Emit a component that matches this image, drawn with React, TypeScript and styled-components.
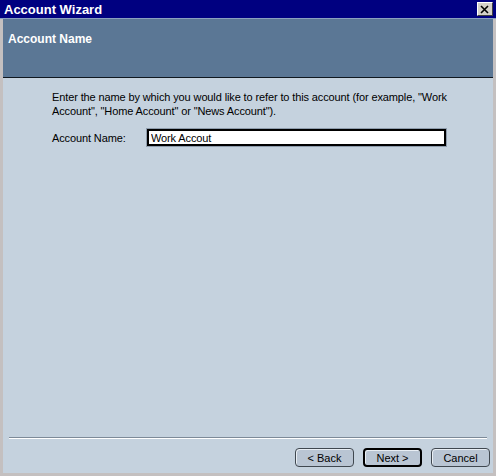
import styled, { createGlobalStyle } from 'styled-components';

const GlobalStyle = createGlobalStyle`
    html, body {
        margin: 0;
        padding: 0;
        background: #c0c0c0;
    }
    * {
        box-sizing: border-box;
    }
`;

const Window = styled.div`
    width: 496px;
    height: 476px;
    display: flex;
    flex-direction: column;
    background: #c4c0c0;
    padding: 0 3px 3px 3px;
    font-family: Tahoma, 'Liberation Sans', Arial, sans-serif;
    font-size: 11px;
`;

const TitleBar = styled.div`
    height: 19px;
    margin: 0 -3px;
    padding: 0 3px 0 4px;
    background: #000080;
    display: flex;
    align-items: center;
    justify-content: space-between;
    color: #fff;
    font-weight: bold;
    font-size: 13px;
    border-bottom: 1px solid #8aa0c0;
`;

const CloseButton = styled.button`
    width: 16px;
    height: 14px;
    padding: 0;
    background: #d4d0c8;
    border: 1px solid;
    border-color: #fff #404040 #404040 #fff;
    display: flex;
    align-items: center;
    justify-content: center;
`;

const Header = styled.div`
    height: 59px;
    background: #5b7795;
    border-bottom: 1px solid #101820;
    color: #fff;
    font-weight: bold;
    font-size: 12px;
    padding: 13px 5px;
`;

const Body = styled.div`
    flex: 1;
    background: #c5d2de;
    display: flex;
    flex-direction: column;
`;

const Content = styled.div`
    flex: 1;
    padding: 12px 40px 0 49px;
    color: #000;
    line-height: 14px;
    letter-spacing: -0.12px;
`;

const Intro = styled.p`
    margin: 0 0 11px 0;
`;

const FieldRow = styled.div`
    display: flex;
    align-items: center;
`;

const Label = styled.label`
    width: 95px;
`;

const TextInput = styled.input`
    width: 299px;
    height: 17px;
    border: 2px solid #000;
    outline: 1px solid #8e9cac;
    font-family: Tahoma, 'Liberation Sans', Arial, sans-serif;
    font-size: 11px;
    letter-spacing: -0.12px;
    padding: 0 2px;
    background: #fff;
`;

const Separator = styled.div`
    margin: 0 6px 0 6px;
    border-top: 1px solid #7d8a98;
    border-bottom: 1px solid #fff;
`;

const ButtonRow = styled.div`
    display: flex;
    justify-content: flex-end;
    gap: 9px;
    padding: 9px 3px 6px 0;
`;

const WizardButton = styled.button<{ $default?: boolean }>`
    width: 59px;
    height: 19px;
    padding: 0;
    background: #b9c5d3;
    border: ${(p) => (p.$default ? '2px solid #000' : '1px solid #404850')};
    border-radius: 4px;
    box-shadow: inset 1px 1px 0 #e8eef4;
    font-family: Tahoma, 'Liberation Sans', Arial, sans-serif;
    font-size: 11px;
    color: #000;
`;

export default function App() {
    return (
        <>
            <GlobalStyle />
            <Window>
                <TitleBar>
                    <span>Account Wizard</span>
                    <CloseButton>
                        <svg width="10" height="9" viewBox="0 0 10 9">
                            <path d="M1 1 L8 8 M8 1 L1 8" stroke="#000" strokeWidth="1.6" />
                        </svg>
                    </CloseButton>
                </TitleBar>
                <Header>Account Name</Header>
                <Body>
                    <Content>
                        <Intro>
                            Enter the name by which you would like to refer to this account (for example, "Work
                            Account", "Home Account" or "News Account").
                        </Intro>
                        <FieldRow>
                            <Label>Account Name:</Label>
                            <TextInput defaultValue="Work Accout" />
                        </FieldRow>
                    </Content>
                    <Separator />
                    <ButtonRow>
                        <WizardButton>&lt; Back</WizardButton>
                        <WizardButton $default>Next &gt;</WizardButton>
                        <WizardButton>Cancel</WizardButton>
                    </ButtonRow>
                </Body>
            </Window>
        </>
    );
}
